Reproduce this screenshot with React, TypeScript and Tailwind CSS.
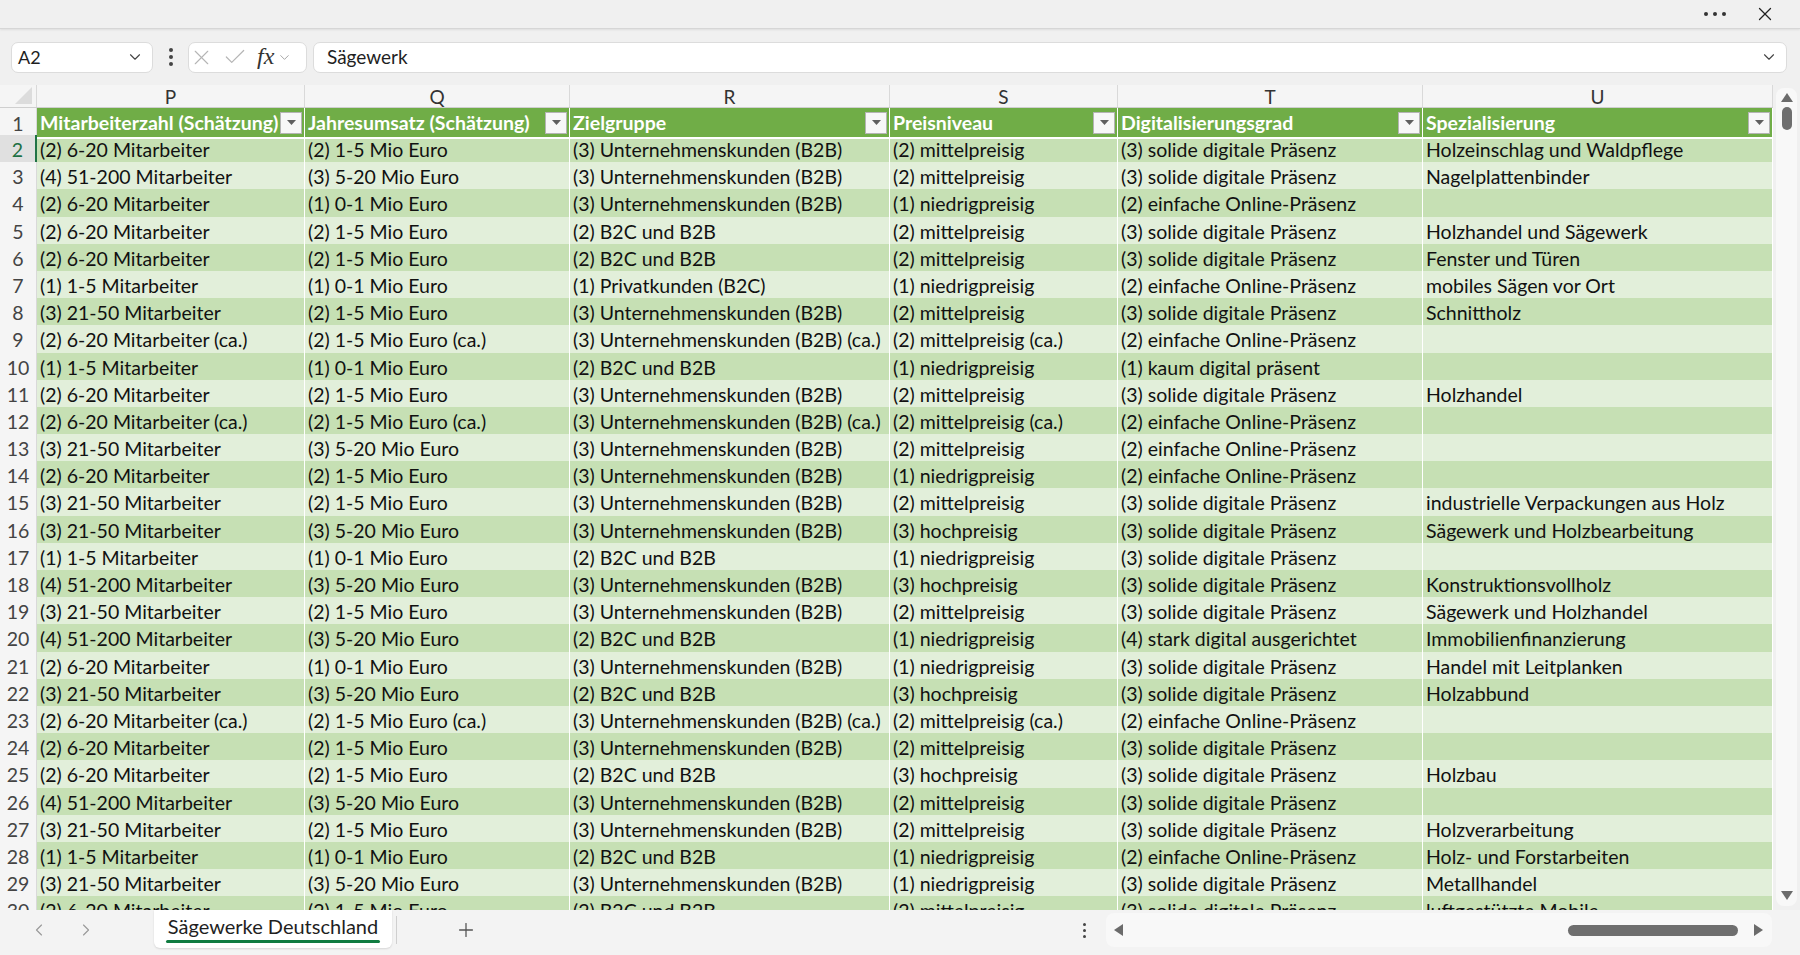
import { ChevronDown, ChevronLeft, ChevronRight, Plus, X, Check } from 'lucide-react';

const CELL_FONT = { fontFamily: 'Lato, "Open Sans", sans-serif' };

const headers = [
  'Mitarbeiterzahl (Schätzung)',
  'Jahresumsatz (Schätzung)',
  'Zielgruppe',
  'Preisniveau',
  'Digitalisierungsgrad',
  'Spezialisierung',
];

const rows: string[][] = [
  ['(2) 6-20 Mitarbeiter', '(2) 1-5 Mio Euro', '(3) Unternehmenskunden (B2B)', '(2) mittelpreisig', '(3) solide digitale Präsenz', 'Holzeinschlag und Waldpflege'],
  ['(4) 51-200 Mitarbeiter', '(3) 5-20 Mio Euro', '(3) Unternehmenskunden (B2B)', '(2) mittelpreisig', '(3) solide digitale Präsenz', 'Nagelplattenbinder'],
  ['(2) 6-20 Mitarbeiter', '(1) 0-1 Mio Euro', '(3) Unternehmenskunden (B2B)', '(1) niedrigpreisig', '(2) einfache Online-Präsenz', ''],
  ['(2) 6-20 Mitarbeiter', '(2) 1-5 Mio Euro', '(2) B2C und B2B', '(2) mittelpreisig', '(3) solide digitale Präsenz', 'Holzhandel und Sägewerk'],
  ['(2) 6-20 Mitarbeiter', '(2) 1-5 Mio Euro', '(2) B2C und B2B', '(2) mittelpreisig', '(3) solide digitale Präsenz', 'Fenster und Türen'],
  ['(1) 1-5 Mitarbeiter', '(1) 0-1 Mio Euro', '(1) Privatkunden (B2C)', '(1) niedrigpreisig', '(2) einfache Online-Präsenz', 'mobiles Sägen vor Ort'],
  ['(3) 21-50 Mitarbeiter', '(2) 1-5 Mio Euro', '(3) Unternehmenskunden (B2B)', '(2) mittelpreisig', '(3) solide digitale Präsenz', 'Schnittholz'],
  ['(2) 6-20 Mitarbeiter (ca.)', '(2) 1-5 Mio Euro (ca.)', '(3) Unternehmenskunden (B2B) (ca.)', '(2) mittelpreisig (ca.)', '(2) einfache Online-Präsenz', ''],
  ['(1) 1-5 Mitarbeiter', '(1) 0-1 Mio Euro', '(2) B2C und B2B', '(1) niedrigpreisig', '(1) kaum digital präsent', ''],
  ['(2) 6-20 Mitarbeiter', '(2) 1-5 Mio Euro', '(3) Unternehmenskunden (B2B)', '(2) mittelpreisig', '(3) solide digitale Präsenz', 'Holzhandel'],
  ['(2) 6-20 Mitarbeiter (ca.)', '(2) 1-5 Mio Euro (ca.)', '(3) Unternehmenskunden (B2B) (ca.)', '(2) mittelpreisig (ca.)', '(2) einfache Online-Präsenz', ''],
  ['(3) 21-50 Mitarbeiter', '(3) 5-20 Mio Euro', '(3) Unternehmenskunden (B2B)', '(2) mittelpreisig', '(2) einfache Online-Präsenz', ''],
  ['(2) 6-20 Mitarbeiter', '(2) 1-5 Mio Euro', '(3) Unternehmenskunden (B2B)', '(1) niedrigpreisig', '(2) einfache Online-Präsenz', ''],
  ['(3) 21-50 Mitarbeiter', '(2) 1-5 Mio Euro', '(3) Unternehmenskunden (B2B)', '(2) mittelpreisig', '(3) solide digitale Präsenz', 'industrielle Verpackungen aus Holz'],
  ['(3) 21-50 Mitarbeiter', '(3) 5-20 Mio Euro', '(3) Unternehmenskunden (B2B)', '(3) hochpreisig', '(3) solide digitale Präsenz', 'Sägewerk und Holzbearbeitung'],
  ['(1) 1-5 Mitarbeiter', '(1) 0-1 Mio Euro', '(2) B2C und B2B', '(1) niedrigpreisig', '(3) solide digitale Präsenz', ''],
  ['(4) 51-200 Mitarbeiter', '(3) 5-20 Mio Euro', '(3) Unternehmenskunden (B2B)', '(3) hochpreisig', '(3) solide digitale Präsenz', 'Konstruktionsvollholz'],
  ['(3) 21-50 Mitarbeiter', '(2) 1-5 Mio Euro', '(3) Unternehmenskunden (B2B)', '(2) mittelpreisig', '(3) solide digitale Präsenz', 'Sägewerk und Holzhandel'],
  ['(4) 51-200 Mitarbeiter', '(3) 5-20 Mio Euro', '(2) B2C und B2B', '(1) niedrigpreisig', '(4) stark digital ausgerichtet', 'Immobilienfinanzierung'],
  ['(2) 6-20 Mitarbeiter', '(1) 0-1 Mio Euro', '(3) Unternehmenskunden (B2B)', '(1) niedrigpreisig', '(3) solide digitale Präsenz', 'Handel mit Leitplanken'],
  ['(3) 21-50 Mitarbeiter', '(3) 5-20 Mio Euro', '(2) B2C und B2B', '(3) hochpreisig', '(3) solide digitale Präsenz', 'Holzabbund'],
  ['(2) 6-20 Mitarbeiter (ca.)', '(2) 1-5 Mio Euro (ca.)', '(3) Unternehmenskunden (B2B) (ca.)', '(2) mittelpreisig (ca.)', '(2) einfache Online-Präsenz', ''],
  ['(2) 6-20 Mitarbeiter', '(2) 1-5 Mio Euro', '(3) Unternehmenskunden (B2B)', '(2) mittelpreisig', '(3) solide digitale Präsenz', ''],
  ['(2) 6-20 Mitarbeiter', '(2) 1-5 Mio Euro', '(2) B2C und B2B', '(3) hochpreisig', '(3) solide digitale Präsenz', 'Holzbau'],
  ['(4) 51-200 Mitarbeiter', '(3) 5-20 Mio Euro', '(3) Unternehmenskunden (B2B)', '(2) mittelpreisig', '(3) solide digitale Präsenz', ''],
  ['(3) 21-50 Mitarbeiter', '(2) 1-5 Mio Euro', '(3) Unternehmenskunden (B2B)', '(2) mittelpreisig', '(3) solide digitale Präsenz', 'Holzverarbeitung'],
  ['(1) 1-5 Mitarbeiter', '(1) 0-1 Mio Euro', '(2) B2C und B2B', '(1) niedrigpreisig', '(2) einfache Online-Präsenz', 'Holz- und Forstarbeiten'],
  ['(3) 21-50 Mitarbeiter', '(3) 5-20 Mio Euro', '(3) Unternehmenskunden (B2B)', '(1) niedrigpreisig', '(3) solide digitale Präsenz', 'Metallhandel'],
  ['(2) 6-20 Mitarbeiter', '(2) 1-5 Mio Euro', '(2) B2C und B2B', '(2) mittelpreisig', '(3) solide digitale Präsenz', 'luftgestützte Mobile'],
];

const GRID = 'grid grid-cols-[37px_268px_265px_320px_228px_305px_350px]';

function FilterButton() {
  return (
    <div className="absolute right-[2px] top-1/2 -translate-y-1/2 w-[22px] h-[22px] bg-[#f7f7f7] border border-[#b4b4b4] flex items-center justify-center">
      <svg width="9" height="5" viewBox="0 0 9 5">
        <path d="M0 0h9L4.5 5z" fill="#5f5f5f" />
      </svg>
    </div>
  );
}

function Triangle({ dir }: { dir: 'up' | 'down' | 'left' | 'right' }) {
  const d = {
    up: 'M0 9h12L6 0z',
    down: 'M0 0h12L6 9z',
    left: 'M9 0v12L0 6z',
    right: 'M0 0v12L9 6z',
  }[dir];
  const vertical = dir === 'up' || dir === 'down';
  return (
    <svg width={vertical ? 12 : 9} height={vertical ? 9 : 12} viewBox={vertical ? '0 0 12 9' : '0 0 9 12'}>
      <path d={d} fill="#6b6b6b" />
    </svg>
  );
}

export default function App() {
  return (
    <div className="w-[1800px] h-[955px] bg-[#f0f0f0] flex flex-col overflow-hidden text-[#1f1f1f]" style={{ fontFamily: 'Lato, "Open Sans", sans-serif' }}>
      {/* window bar */}
      <div className="h-[29px] shrink-0 flex items-center justify-end gap-[28px] pr-[24px] border-b border-[#d6d6d6] shadow-[0_1px_2px_rgba(0,0,0,0.08)]">
        <div className="flex gap-[5px]">
          <span className="w-[4px] h-[4px] rounded-full bg-[#333]" />
          <span className="w-[4px] h-[4px] rounded-full bg-[#333]" />
          <span className="w-[4px] h-[4px] rounded-full bg-[#333]" />
        </div>
        <X size={22} strokeWidth={1.4} className="text-[#222]" />
      </div>

      {/* formula bar */}
      <div className="h-[56px] shrink-0 flex items-center pl-[11px] pr-[13px] gap-[6px]">
        <div className="w-[142px] h-[31px] bg-white border border-[#dcdcdc] rounded-[7px] flex items-center justify-between pl-[6px] pr-[8px]">
          <span className="text-[18px]">A2</span>
          <ChevronDown size={18} strokeWidth={1.5} className="text-[#444]" />
        </div>
        <div className="w-[23px] flex flex-col items-center gap-[3px]">
          <span className="w-[4px] h-[4px] rounded-full bg-[#444]" />
          <span className="w-[4px] h-[4px] rounded-full bg-[#444]" />
          <span className="w-[4px] h-[4px] rounded-full bg-[#444]" />
        </div>
        <div className="w-[119px] h-[31px] bg-white border border-[#dcdcdc] rounded-[7px] flex items-center pl-[0px] pr-[3px]">
          <X size={25} strokeWidth={1.1} className="text-[#b5b5b5]" />
          <Check size={26} strokeWidth={1.1} className="text-[#b5b5b5] ml-[8px]" />
          <span className="ml-[9px] text-[24px] italic leading-none text-[#333] -mt-[3px]" style={{ fontFamily: '"Liberation Serif", serif' }}>fx</span>
          <ChevronDown size={15} strokeWidth={1.4} className="text-[#999] ml-[3px]" />
        </div>
        <div className="flex-1 h-[31px] bg-white border border-[#dcdcdc] rounded-[7px] flex items-center justify-between pl-[13px] pr-[8px]">
          <span className="text-[19px]">Sägewerk</span>
          <ChevronDown size={18} strokeWidth={1.5} className="text-[#444]" />
        </div>
      </div>

      {/* sheet area */}
      <div className="flex-1 flex min-h-0">
        <div className="flex-1 overflow-hidden bg-white" style={CELL_FONT}>
          {/* column letters */}
          <div className={`${GRID} h-[23px] bg-[#f5f5f5] border-b border-[#cfcfcf]`}>
            <div className="relative border-r border-[#d9d9d9]">
              <svg className="absolute right-[4px] bottom-[3px]" width="17" height="17" viewBox="0 0 17 17">
                <path d="M17 0v17H0z" fill="#dcdcdc" />
              </svg>
            </div>
            {['P', 'Q', 'R', 'S', 'T', 'U'].map((c) => (
              <div key={c} className="flex items-center justify-center border-r border-[#d9d9d9] text-[19px] leading-none text-[#333]">
                {c}
              </div>
            ))}
          </div>

          {/* table header */}
          <div className={`${GRID} h-[27px]`}>
            <div className="bg-[#f5f5f5] border-r border-b border-[#d9d9d9] flex items-center justify-center text-[19.5px] text-[#444]">1</div>
            {headers.map((h) => (
              <div key={h} className="relative bg-[#70ad47] border-r border-b-2 border-white flex items-center pl-[3px] text-[19.5px] font-bold text-white whitespace-nowrap">
                {h}
                <FilterButton />
              </div>
            ))}
          </div>

          {/* rows */}
          {rows.map((r, i) => {
            const n = i + 2;
            const selected = n === 2;
            return (
              <div key={n} className={`${GRID} h-[27.2px]`}>
                <div
                  className={`flex items-center justify-center border-b border-[#d9d9d9] text-[19.5px] ${
                    selected ? 'bg-[#e0e0e0] text-[#1e7145] border-r-2 border-r-[#217346]' : 'bg-[#f5f5f5] text-[#444] border-r border-r-[#d9d9d9]'
                  }`}
                >
                  {n}
                </div>
                {r.map((v, j) => (
                  <div
                    key={j}
                    className={`flex items-center pl-[3px] border-r border-b border-white text-[19.5px] text-[#111] whitespace-nowrap overflow-hidden ${
                      i % 2 === 0 ? 'bg-[#c6e0b4]' : 'bg-[#e2efda]'
                    }`}
                  >
                    {v}
                  </div>
                ))}
              </div>
            );
          })}
        </div>

        {/* vertical scrollbar */}
        <div className="w-[27px] shrink-0 bg-[#f0f0f0] flex flex-col items-center pt-[3px] pb-[4px]">
          <div className="w-[21px] flex-1 bg-[#f8f8f8] rounded-[8px] flex flex-col items-center pt-[5px] pb-[6px]">
            <Triangle dir="up" />
            <div className="w-[10px] h-[23px] bg-[#6e6e6e] rounded-full mt-[5px]" />
            <div className="flex-1" />
            <Triangle dir="down" />
          </div>
        </div>
      </div>

      {/* sheet tabs */}
      <div className="h-[45px] shrink-0 flex items-start bg-[#f3f3f3]">
        <div className="flex items-center h-[40px] pl-[29px] gap-[27px] text-[#9a9a9a]">
          <ChevronLeft size={20} strokeWidth={1.4} />
          <ChevronRight size={20} strokeWidth={1.4} />
        </div>
        <div className="ml-[58px] w-[238px] h-[38px] bg-white rounded-b-[6px] shadow-[0_1px_2px_rgba(0,0,0,0.12)] flex flex-col items-center justify-center">
          <span className="text-[20px] leading-[23px] text-[#1f1f1f]">Sägewerke Deutschland</span>
          <span className="w-[214px] h-[3px] bg-[#107c41] rounded-full mt-[2px]" />
        </div>
        <div className="ml-[4px] mt-[6px] w-px h-[28px] bg-[#cfcfcf]" />
        <div className="ml-[58px] h-[40px] flex items-center">
          <Plus size={22} strokeWidth={1.4} className="text-[#555]" />
        </div>
        <div className="ml-[606px] h-[40px] flex flex-col items-center justify-center gap-[3px]">
          <span className="w-[3px] h-[3px] rounded-full bg-[#444]" />
          <span className="w-[3px] h-[3px] rounded-full bg-[#444]" />
          <span className="w-[3px] h-[3px] rounded-full bg-[#444]" />
        </div>
        <div className="ml-[20px] mt-[3px] w-[666px] h-[34px] bg-[#f8f8f8] rounded-[8px] flex items-center pl-[8px] pr-[9px]">
          <Triangle dir="left" />
          <div className="flex-1" />
          <div className="w-[170px] h-[11px] bg-[#6e6e6e] rounded-full mr-[16px]" />
          <Triangle dir="right" />
        </div>
      </div>
    </div>
  );
}
